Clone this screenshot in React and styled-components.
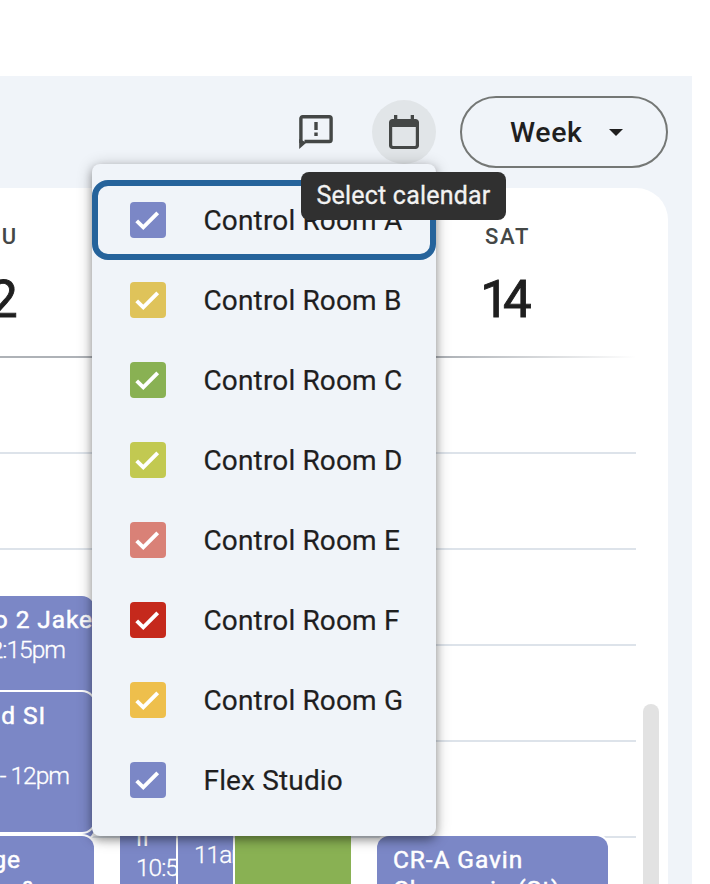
import * as React from "react";
import styled, { createGlobalStyle, css } from "styled-components";

const GlobalStyle = createGlobalStyle`
  * {
    box-sizing: border-box;
  }

  body {
    margin: 0;
    background: #ffffff;
    font-family: Roboto, "Liberation Sans", sans-serif;
    color: #1f1f1f;
  }
`;

const Page = styled.div`
  height: 884px;
  padding: 76px 18px 0 0;
  overflow: hidden;
`;

const Shell = styled.div`
  position: relative;
  height: 808px;
  padding-right: 24px;
  background: #f0f4f9;
`;

const Toolbar = styled.header`
  display: flex;
  justify-content: flex-end;
  align-items: center;
  height: 112px;
`;

const IconButton = styled.button`
  display: flex;
  align-items: center;
  justify-content: center;
  width: 64px;
  height: 64px;
  margin-right: 24px;
  padding: 0;
  border: 0;
  border-radius: 50%;
  color: #444746;
  background: ${(props) => (props.$active ? "#e1e5e8" : "transparent")};
`;

const ViewButton = styled.button`
  display: flex;
  align-items: center;
  width: 208px;
  height: 72px;
  padding: 0 0 0 48px;
  border: 2px solid #747775;
  border-radius: 36px;
  background: transparent;
  color: #1f1f1f;
  font: 500 28.5px Roboto, sans-serif;
  letter-spacing: 0.6px;
`;

const Caret = styled.span`
  margin-left: 27px;
  border: 7.5px solid transparent;
  border-top-color: #1f1f1f;
  border-bottom: 0;
`;

const Calendar = styled.main`
  height: 696px;
  overflow: hidden;
  background: #ffffff;
  border-top-right-radius: 32px;
`;

const columns = css`
  display: grid;
  grid-template-columns: repeat(3, 257px);
  margin-left: -137px;
`;

const DayHeader = styled.div`
  ${columns}
  height: 168px;
`;

const Day = styled.div`
  padding: 35px 0 0 4px;
  text-align: center;
`;

const DayName = styled.div`
  font-size: 22px;
  font-weight: 500;
  line-height: 28px;
  letter-spacing: 1.7px;
  color: #444746;
`;

const DayNumber = styled.div`
  margin: 18px 9px 0 0;
  font-size: 51px;
  line-height: 61px;
  letter-spacing: -6px;
  -webkit-text-stroke: 0.9px #1f1f1f;
`;

const HeaderLine = styled.div`
  width: 636px;
  height: 2px;
  background: linear-gradient(to right, #aeb2b7 70%, #ffffff);
`;

const Body = styled.div`
  display: flex;
  height: 526px;
`;

const Grid = styled.div`
  display: grid;
  width: 636px;
  height: 526px;

  > * {
    grid-area: 1 / 1;
  }
`;

const Hours = styled.div`
  display: flex;
  flex-direction: column;
`;

const Hour = styled.div`
  flex: 0 0 96px;
  border-bottom: 2px solid #dde3ea;
`;

const Events = styled.div`
  ${columns}
`;

const DayColumn = styled.div`
  display: flex;
  flex-direction: ${(props) => (props.$split ? "row" : "column")};
  gap: ${(props) => (props.$split ? 2 : 0)}px;
  width: 231px;
  padding-top: ${(props) => props.$start}px;
`;

const Event = styled.div`
  flex: none;
  width: ${(props) => props.$width || 231}px;
  height: ${(props) => props.$height}px;
  margin-top: ${(props) => props.$shift || 0}px;
  padding: 9px 0 0 16px;
  overflow: hidden;
  border-radius: ${(props) => (props.$square ? 0 : 12)}px;
  background: ${(props) => props.$color || "#7b87c6"};
  box-shadow: ${(props) => (props.$square ? "none" : "0 0 0 2px #ffffff")};
  color: #ffffff;
  white-space: nowrap;
`;

const Title = styled.div`
  height: 30px;
  padding-right: ${(props) => props.$inset || 0}px;
  font-size: 24.5px;
  font-weight: 400;
  line-height: 30px;
  letter-spacing: 0.9px;
  text-align: ${(props) => (props.$inset ? "right" : "left")};
  -webkit-text-stroke: ${(props) => (props.$light ? 0 : 0.5)}px #ffffff;
`;

const Time = styled.div`
  height: 30px;
  margin-top: ${(props) => props.$gap || 0}px;
  padding-right: ${(props) => props.$inset || 0}px;
  font-size: 24.5px;
  font-weight: 300;
  line-height: 30px;
  letter-spacing: -1px;
  text-align: ${(props) => (props.$inset ? "right" : "left")};
  -webkit-text-stroke: 0.3px #ffffff;
`;

const Scrollbar = styled.div`
  width: 16px;
  height: 220px;
  margin: 346px 0 0 7px;
  border-radius: 8px;
  background: #e2e2e2;
`;

/* overlays opened from the toolbar */
const Menu = styled.ul`
  position: absolute;
  top: 88px;
  left: 92px;
  width: 344px;
  height: 672px;
  margin: 0;
  padding: 16px 0;
  list-style: none;
  border-radius: 8px;
  background: #f0f4f9;
  box-shadow: 0 4px 8px rgba(0, 0, 0, 0.3), 0 2px 16px rgba(0, 0, 0, 0.24);
`;

const MenuItem = styled.li`
  display: flex;
  align-items: center;
  height: 80px;
  padding-left: 32px;
  border: 6px solid ${(props) => (props.$focused ? "#25639b" : "transparent")};
  border-radius: 16px;
`;

const Checkbox = styled.span`
  display: flex;
  width: 36px;
  height: 36px;
  margin-right: 37px;
  border-radius: 4px;
  background: ${(props) => props.$color};
`;

const Label = styled.span`
  padding: 1px 0 0 0.5px;
  font-size: 28px;
  line-height: 40px;
  letter-spacing: 0.15px;
  white-space: nowrap;
  -webkit-text-stroke: 0.2px #1f1f1f;
`;

const Tooltip = styled.div`
  position: absolute;
  top: 96px;
  left: 301px;
  width: 205px;
  height: 48px;
  border-radius: 8px;
  background: #303030;
  color: #f2f2f2;
  font-size: 25px;
  line-height: 48px;
  letter-spacing: 0.2px;
  text-align: center;
  -webkit-text-stroke: 0.3px #f2f2f2;
`;

const calendars = [
  { name: "Control Room A", color: "#7b87c6" },
  { name: "Control Room B", color: "#dfc35a" },
  { name: "Control Room C", color: "#89b153" },
  { name: "Control Room D", color: "#c2c951" },
  { name: "Control Room E", color: "#d98177" },
  { name: "Control Room F", color: "#c5291c" },
  { name: "Control Room G", color: "#eebf4c" },
  { name: "Flex Studio", color: "#7b87c6" },
];

const days = [
  { name: "THU", number: 12 },
  { name: "FRI", number: 13 },
  { name: "SAT", number: 14 },
];

const FeedbackIcon = () => (
  <svg width="36" height="36" viewBox="0 2 36 36" fill="none">
    <path
      d="M2.900 31V6.500C2.900 5.300 3.600 4.700 4.700 4.700h26.600c1.200 0 1.800.6 1.800 1.800v21.200c0 1.200-.6 1.800-1.800 1.800H6.500"
      stroke="currentColor"
      strokeWidth="3.400"
    />
    <path d="M1.200 27v10L8.500 30.500z" fill="currentColor" />
    <path d="M16.300 10h3.400v8h-3.400zM16.300 20.500h3.400v3.400h-3.400z" fill="currentColor" />
  </svg>
);

const CalendarIcon = () => (
  <svg width="32" height="36" viewBox="0 0 32 36" fill="currentColor">
    <path
      fillRule="evenodd"
      d="M6 1h3.300v4h13.400V1H26v4h1.500C29.500 5 31 6.500 31 8.500v23c0 2-1.500 3.500-3.500 3.500h-23C2.500 35 1 33.500 1 31.500v-23C1 6.500 2.500 5 4.500 5H6zM4.200 13v18c0 .6.300.9.900.9h21.800c.6 0 .9-.3.900-.9V13z"
    />
  </svg>
);

const CheckIcon = () => (
  <svg width="36" height="36" viewBox="0 0 36 36" fill="none">
    <path d="M6.700 18.800l6.600 6.500L27.700 10.900" stroke="#ffffff" strokeWidth="3.900" />
  </svg>
);

const App = () => {
  return (
    <Page>
      <GlobalStyle />
      <Shell>
        <Toolbar>
          <IconButton aria-label="Send feedback">
            <FeedbackIcon />
          </IconButton>
          <IconButton $active aria-label="Select calendar">
            <CalendarIcon />
          </IconButton>
          <ViewButton>
            Week
            <Caret />
          </ViewButton>
        </Toolbar>
        <Calendar>
          <DayHeader>
            {days.map((day) => (
              <Day key={day.name}>
                <DayName>{day.name}</DayName>
                <DayNumber>{day.number}</DayNumber>
              </Day>
            ))}
          </DayHeader>
          <HeaderLine />
          <Body>
            <Grid>
              <Hours>
                {[8, 9, 10, 11, 12].map((hour) => (
                  <Hour key={hour} />
                ))}
              </Hours>
              <Events>
                <DayColumn $start={238}>
                  <Event $height={244}>
                    <Title $inset={1}>Studio 2 Jake</Title>
                    <Time $inset={29}>- 12:15pm</Time>
                  </Event>
                  <Event $height={140} $shift={-148}>
                    <Title $inset={48}>d SI</Title>
                    <Time $inset={25} $gap={30}>
                      - 12pm
                    </Time>
                  </Event>
                  <Event $height={60} $shift={4}>
                    <Title $inset={73}>ge</Title>
                    <Title $inset={57}>&amp;</Title>
                  </Event>
                </DayColumn>
                <DayColumn $split $start={456}>
                  <Event $square $width={56} $height={80}>
                    <Title $light>ll</Title>
                    <Time>10:55am</Time>
                  </Event>
                  <Event $square $width={55} $height={63} $shift={17}>
                    <Time>11am</Time>
                  </Event>
                  <Event $square $width={116} $height={80} $color="#89b153" />
                </DayColumn>
                <DayColumn $start={478}>
                  <Event $height={60}>
                    <Title>CR-A Gavin</Title>
                    <Title>Champnis (St)</Title>
                  </Event>
                </DayColumn>
              </Events>
            </Grid>
            <Scrollbar />
          </Body>
        </Calendar>
        <Menu>
          {calendars.map((calendar, index) => (
            <MenuItem key={calendar.name} $focused={index === 0}>
              <Checkbox $color={calendar.color}>
                <CheckIcon />
              </Checkbox>
              <Label>{calendar.name}</Label>
            </MenuItem>
          ))}
        </Menu>
        <Tooltip>Select calendar</Tooltip>
      </Shell>
    </Page>
  );
};

export default App;
